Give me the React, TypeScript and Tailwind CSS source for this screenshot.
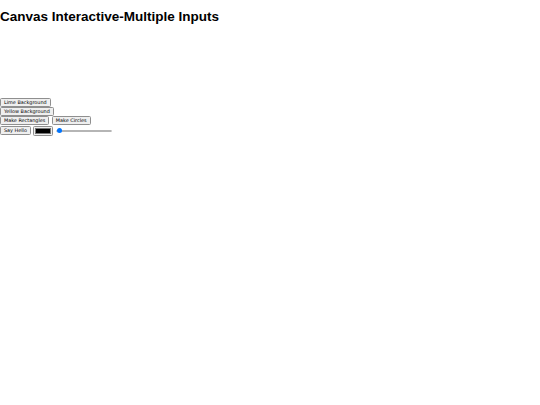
import { useState } from 'react'

const btn =
  'h-[9px] px-[3px] border border-[#8f8f8f] rounded-[1.5px] bg-[#efefef] text-black text-[4.9px] leading-none whitespace-nowrap font-["DejaVu_Sans",sans-serif]'

export default function App() {
  const [color] = useState('#000000')
  const [value] = useState(5)

  return (
    <div className="w-[540px] h-[405px] bg-white text-black font-['Liberation_Sans',Arial,sans-serif]">
      <h1 className="pt-[9.3px] text-[13.5px] leading-[15.2px] font-bold">Canvas Interactive-Multiple Inputs</h1>
      <div className="w-[127px] h-[73.8px]" />
      <div className="flex flex-col items-start">
        <button className={btn}>Lime Background</button>
        <button className={btn}>Yellow Background</button>
        <div className="flex gap-[2.5px]">
          <button className={btn}>Make Rectangles</button>
          <button className={btn}>Make Circles</button>
        </div>
        <div className="flex items-center gap-[2px] h-[11px]">
          <button className={btn}>Say Hello</button>
          <div className="w-[20px] h-[10px] border border-[#8f8f8f] rounded-[1.5px] bg-[#efefef] p-[1.2px]">
            <div className="w-full h-full border border-[#777]" style={{ backgroundColor: color }} />
          </div>
          <div className="relative w-[56px] h-[6px] ml-[1px] flex items-center">
            <div className="w-full h-[2px] rounded-full bg-[#efefef] border-[0.5px] border-[#b5b5b5]" />
            <div
              className="absolute top-[0.5px] w-[5px] h-[5px] rounded-full bg-[#0075ff]"
              style={{ left: `${value * 0.2}px` }}
            />
          </div>
        </div>
      </div>
    </div>
  )
}
